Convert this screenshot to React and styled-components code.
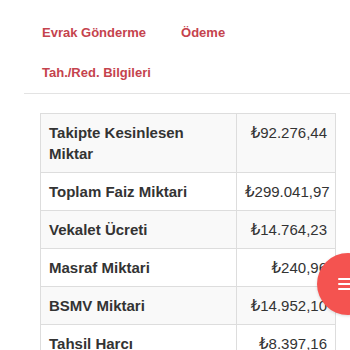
import React from "react";
import styled, { createGlobalStyle } from "styled-components";

const Global = createGlobalStyle`
  html, body { margin: 0; padding: 0; background: #fff; }
  body { font-family: "Liberation Sans", Arial, "DejaVu Sans", sans-serif; color: #333; overflow: hidden; }
`;

const Page = styled.div`
  margin-top: -27px;
  padding-left: 24px;
`;

const Nav = styled.ul`
  list-style: none;
  margin: 0;
  padding: 0 0 0 3px;
  display: flex;
  flex-wrap: wrap;
  border-bottom: 1px solid #e3e3e3;
`;

const NavItem = styled.li`
  padding: 10px 15px;
  margin-right: 5px;
  font-size: 13px;
  line-height: 20px;
  font-weight: bold;
  color: #c5434d;
  white-space: nowrap;
`;

const Content = styled.div`
  padding: 19px 14px 0 16px;
`;

const Table = styled.table`
  width: 100%;
  table-layout: fixed;
  border-collapse: collapse;
  font-size: 15px;
  line-height: 21px;
`;

const LabelCol = styled.col`
  width: 196px;
`;

const Row = styled.tr`
  background: ${(p) => (p.$striped ? "#f9f9f9" : "#fff")};
`;

const Label = styled.th`
  padding: 8px;
  border: 1px solid #ddd;
  text-align: left;
  vertical-align: top;
  font-weight: bold;
  color: #333;
`;

const Value = styled.td`
  padding: 8px;
  border: 1px solid #ddd;
  text-align: right;
  vertical-align: top;
  color: #333;
  white-space: nowrap;
`;

const Fab = styled.button`
  position: fixed;
  top: 253px;
  left: 317px;
  width: 62px;
  height: 62px;
  border-radius: 50%;
  border: none;
  padding: 0;
  background: #f45350;
  display: flex;
  align-items: center;
  justify-content: center;
  box-shadow: 0 1px 3px rgba(0, 0, 0, 0.15);
`;

const rows = [
  ["Takipte Kesinlesen Miktar", "₺92.276,44"],
  ["Toplam Faiz Miktari", "₺299.041,97"],
  ["Vekalet Ücreti", "₺14.764,23"],
  ["Masraf Miktari", "₺240,96"],
  ["BSMV Miktari", "₺14.952,10"],
  ["Tahsil Harcı", "₺8.397,16"],
];

export default function App() {
  return (
    <>
      <Global />
      <Page>
        <Nav>
          <NavItem>İcra Bilgileri</NavItem>
          <NavItem>Alacak Kalemleri</NavItem>
          <NavItem>Evrak Gönderme</NavItem>
          <NavItem>Ödeme</NavItem>
          <NavItem>Tah./Red. Bilgileri</NavItem>
        </Nav>
        <Content>
          <Table>
            <colgroup>
              <LabelCol />
              <col />
            </colgroup>
            <tbody>
              {rows.map(([l, v], i) => (
                <Row key={l} $striped={i % 2 === 0}>
                  <Label>{l}</Label>
                  <Value>{v}</Value>
                </Row>
              ))}
            </tbody>
          </Table>
        </Content>
      </Page>
      <Fab aria-label="menu">
        <svg width="62" height="62" viewBox="0 0 62 62">
          <g stroke="#fff" strokeWidth="2" strokeLinecap="round">
            <line x1="22" y1="26" x2="40" y2="26" />
            <line x1="22" y1="31" x2="40" y2="31" />
            <line x1="22" y1="36" x2="40" y2="36" />
          </g>
        </svg>
      </Fab>
    </>
  );
}
